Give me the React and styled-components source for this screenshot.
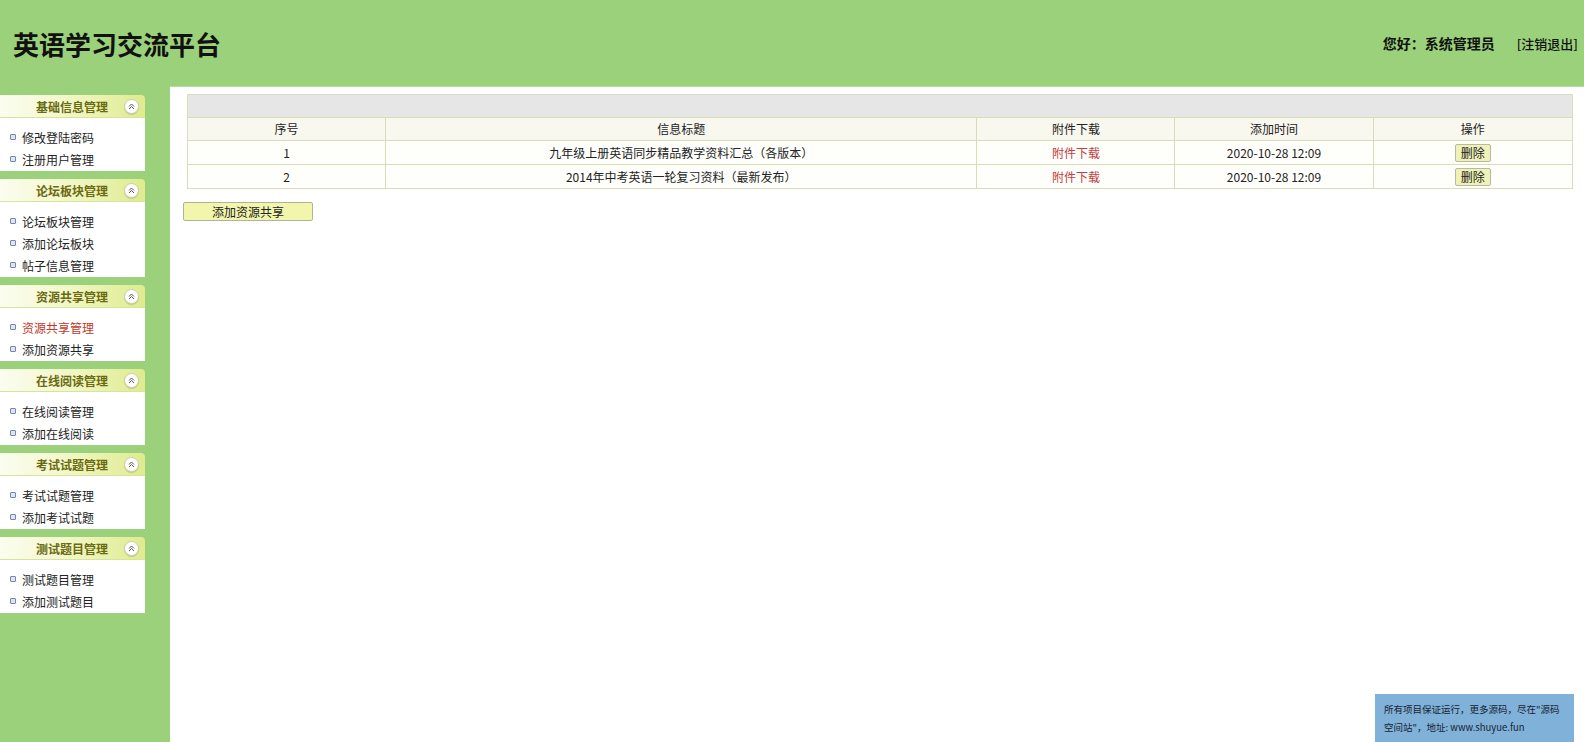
import React from "react";
import styled, { createGlobalStyle } from "styled-components";

const GlobalStyle = createGlobalStyle`
  html, body {
    margin: 0;
    padding: 0;
    background: #9bd17a;
    font-family: "Noto Sans CJK SC", "Noto Sans", sans-serif;
    font-size: 12px;
    color: #222;
  }
`;

const Page = styled.div`
  width: 100%;
  height: 100vh;
  display: flex;
  flex-direction: column;
  overflow: hidden;
`;

const TopBar = styled.div`
  height: 86px;
  display: flex;
  align-items: center;
  justify-content: space-between;
  padding: 0 6px 0 13px;
  flex-shrink: 0;
`;

const Logo = styled.h1`
  margin: 0;
  font-size: 26px;
  font-weight: 700;
  color: #111;
`;

const UserBox = styled.div`
  display: flex;
  align-items: center;
  gap: 22px;
  color: #111;
`;

const Hello = styled.span`
  font-size: 14px;
  font-weight: 700;
`;

const Logout = styled.span`
  font-size: 13px;
  font-weight: 500;
`;

const Body = styled.div`
  flex: 1;
  display: flex;
`;

const Sidebar = styled.div`
  width: 170px;
  flex-shrink: 0;
  padding-top: 9px;
  display: flex;
  flex-direction: column;
  gap: 8px;
`;

const Panel = styled.div`
  width: 145px;
`;

const PanelHead = styled.div`
  height: 23px;
  display: flex;
  align-items: center;
  justify-content: flex-end;
  padding-right: 6px;
  gap: 16px;
  border-top-right-radius: 4px;
  background: linear-gradient(to right, #fbfdf0 0%, #f4f8cf 40%, #dfeb8e 100%);
  border-bottom: 1px solid #d6e39a;
  box-sizing: border-box;
`;

const PanelTitle = styled.span`
  font-size: 12px;
  font-weight: 700;
  color: #6a6a10;
`;

const Toggle = styled.span`
  width: 13px;
  height: 13px;
  border-radius: 50%;
  background: #fff;
  border: 1px solid #c8cfa8;
  display: flex;
  align-items: center;
  justify-content: center;
  box-shadow: 0 1px 1px rgba(0, 0, 0, 0.15);
`;

const PanelBody = styled.ul`
  list-style: none;
  margin: 0;
  padding: 8px 0 1px 0;
  background: #fff;
`;

const Item = styled.li`
  height: 22px;
  display: flex;
  align-items: center;
  padding-left: 10px;
  gap: 6px;
  font-size: 12px;
  color: ${(p) => (p.$active ? "#c0392b" : "#222")};
`;

const Bullet = styled.span`
  width: 4px;
  height: 4px;
  border: 1px solid #7a86a8;
  border-radius: 1px;
  background: #dfe5f2;
`;

const Main = styled.div`
  flex: 1;
  background: #fff;
  border-top: 1px solid #b5dea0;
  padding: 7px 11px 0 13px;
  position: relative;
`;

const TableWrap = styled.div`
  padding-left: 4px;
`;

const Table = styled.table`
  width: 100%;
  border-collapse: collapse;
  border: 1px solid #d8dcb8;
  font-size: 12px;
  line-height: 16px;
`;

const Row = styled.tr`
  height: ${(p) => p.$h || 24}px;
`;

const Caption = styled.td`
  padding: 0;
  background: #e6e6e6;
  border: 1px solid #d8dcb8;
`;

const Th = styled.th`
  padding: 0;
  font-weight: 400;
  background: #f8f8ee;
  border: 1px solid #d8dcb8;
  text-align: center;
  width: ${(p) => p.$w || "auto"};
`;

const Td = styled.td`
  padding: 0;
  text-align: center;
  border: 1px solid #d8dcb8;
  background: #fefefb;
  color: ${(p) => (p.$link ? "#c24040" : "#222")};
`;

const SmallBtn = styled.button`
  display: inline-block;
  vertical-align: middle;
  font-family: inherit;
  font-size: 12px;
  line-height: 16px;
  padding: 0 5px;
  height: 18px;
  background: #eff2b8;
  border: 1px solid #b9b9a0;
  border-radius: 2px;
  color: #222;
`;

const AddBtn = styled.button`
  margin-top: 13px;
  width: 130px;
  height: 19px;
  font-family: inherit;
  font-size: 12px;
  line-height: 16px;
  background: #f2f6ad;
  border: 1px solid #b2b29a;
  border-radius: 2px;
  color: #222;
  padding: 0;
`;

const Notice = styled.div`
  position: absolute;
  right: 10px;
  bottom: 0;
  width: 199px;
  height: 48px;
  box-sizing: border-box;
  padding: 6px 9px;
  background: #7fb1d9;
  font-size: 9.5px;
  line-height: 18px;
  color: #1a2230;
  white-space: nowrap;
`;

const menus = [
  { title: "基础信息管理", items: ["修改登陆密码", "注册用户管理"] },
  { title: "论坛板块管理", items: ["论坛板块管理", "添加论坛板块", "帖子信息管理"] },
  { title: "资源共享管理", items: ["资源共享管理", "添加资源共享"], active: 0 },
  { title: "在线阅读管理", items: ["在线阅读管理", "添加在线阅读"] },
  { title: "考试试题管理", items: ["考试试题管理", "添加考试试题"] },
  { title: "测试题目管理", items: ["测试题目管理", "添加测试题目"] },
];

const rows = [
  { id: 1, title: "九年级上册英语同步精品教学资料汇总（各版本）", time: "2020-10-28 12:09" },
  { id: 2, title: "2014年中考英语一轮复习资料（最新发布）", time: "2020-10-28 12:09" },
];

const Chevrons = () => (
  <svg width="7" height="7" viewBox="0 0 7 7">
    <path d="M1 3.5 L3.5 1 L6 3.5 M1 6 L3.5 3.5 L6 6" fill="none" stroke="#555" strokeWidth="1" />
  </svg>
);

export default function App() {
  return (
    <Page>
      <GlobalStyle />
      <TopBar>
        <Logo>英语学习交流平台</Logo>
        <UserBox>
          <Hello>您好：系统管理员</Hello>
          <Logout>[注销退出]</Logout>
        </UserBox>
      </TopBar>
      <Body>
        <Sidebar>
          {menus.map((m) => (
            <Panel key={m.title}>
              <PanelHead>
                <PanelTitle>{m.title}</PanelTitle>
                <Toggle>
                  <Chevrons />
                </Toggle>
              </PanelHead>
              <PanelBody>
                {m.items.map((it, i) => (
                  <Item key={it} $active={m.active === i}>
                    <Bullet />
                    {it}
                  </Item>
                ))}
              </PanelBody>
            </Panel>
          ))}
        </Sidebar>
        <Main>
          <TableWrap>
            <Table>
              <tbody>
                <Row $h={23}>
                  <Caption colSpan={5} />
                </Row>
                <Row $h={23}>
                  <Th $w="14.3%">序号</Th>
                  <Th $w="42.7%">信息标题</Th>
                  <Th $w="14.3%">附件下载</Th>
                  <Th $w="14.3%">添加时间</Th>
                  <Th>操作</Th>
                </Row>
                {rows.map((r) => (
                  <Row key={r.id}>
                    <Td>{r.id}</Td>
                    <Td>{r.title}</Td>
                    <Td $link>附件下载</Td>
                    <Td>{r.time}</Td>
                    <Td>
                      <SmallBtn>删除</SmallBtn>
                    </Td>
                  </Row>
                ))}
              </tbody>
            </Table>
          </TableWrap>
          <AddBtn>添加资源共享</AddBtn>
          <Notice>
            所有项目保证运行，更多源码，尽在"源码
            <br />
            空间站"，地址: www.shuyue.fun
          </Notice>
        </Main>
      </Body>
    </Page>
  );
}
